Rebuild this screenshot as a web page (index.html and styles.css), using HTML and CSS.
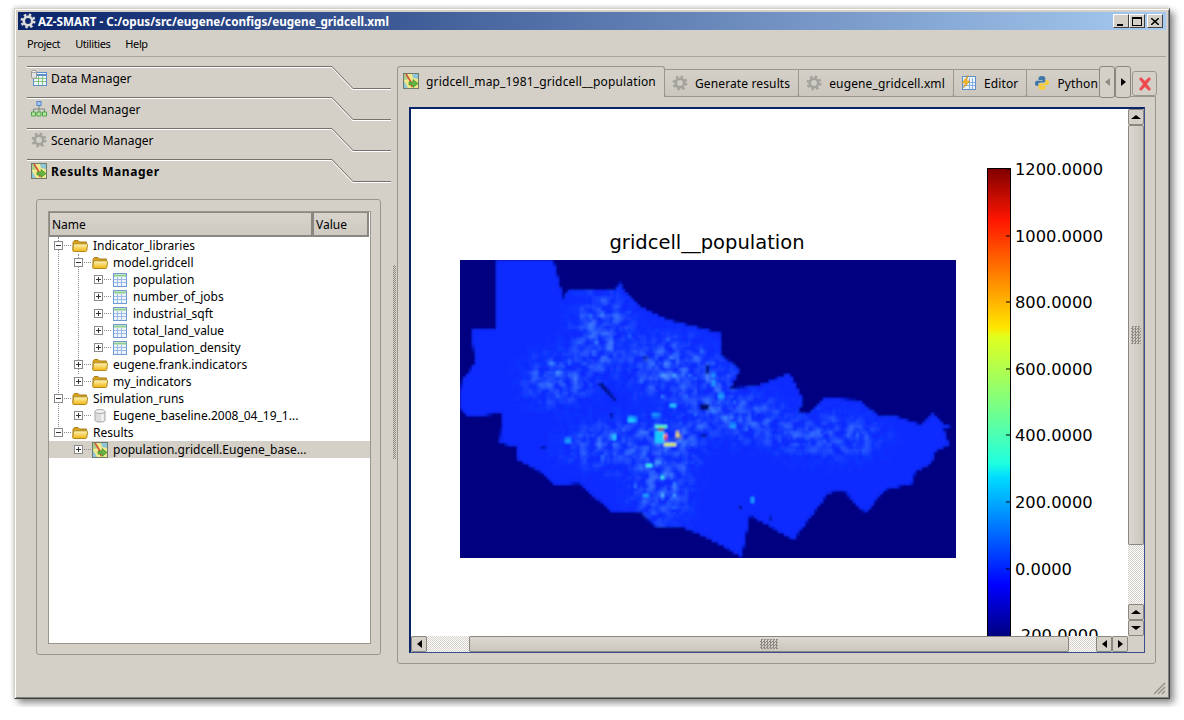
FILE: index.html
```html
<!DOCTYPE html>
<html lang="en">
<head>
    <meta charset="UTF-8">
    <meta name="viewport" content="width=device-width, initial-scale=1.0">
    <title>AZ-SMART</title>
    <link rel="stylesheet" href="styles.css">
</head>
<body>
    <svg class="defs" width="0" height="0">
        <defs>
            <linearGradient id="folder-front" x1="0" y1="0" x2="0" y2="1">
                <stop offset="0" stop-color="#fff6bd"/>
                <stop offset="1" stop-color="#f0b40f"/>
            </linearGradient>
        </defs>
        <symbol id="gear" viewBox="0 0 16 16">
            <circle cx="8" cy="8" r="6.2" fill="none" stroke="currentColor" stroke-width="2.6" stroke-dasharray="2.4 2.47"/>
            <circle cx="8" cy="8" r="4.2" fill="none" stroke="currentColor" stroke-width="2.6"/>
        </symbol>
        <symbol id="folder" viewBox="0 0 16 16">
            <path d="M1 12V4.500L2.500 2.500h3.500L7.500 4H14.500V12z" fill="#d9a21c" stroke="#a87d1a"/>
            <path d="M1.500 13.500C.8 13.500.7 12.800.8 12L1.500 7C1.600 6.200 2 5.800 2.800 5.800H14.500C15.300 5.800 15.600 6.400 15.500 7L14.800 12.300C14.700 13.100 14.200 13.500 13.500 13.500z" fill="url(#folder-front)" stroke="#b08a1f"/>
        </symbol>
        <symbol id="table" viewBox="0 0 16 16">
            <rect x="1.500" y="1.500" width="13" height="13" fill="#eef4fc" stroke="#6f9bd0"/>
            <path d="M2 3.500h12" stroke="#8fcf8a" stroke-width="2"/>
            <path d="M2 7.500h12M2 10.500h12M5.500 5v9M9.500 5v9" stroke="#9dbbe2"/>
        </symbol>
        <symbol id="cylinder" viewBox="0 0 16 16">
            <path d="M3 3.500v9c0 2 10 2 10 0v-9z" fill="#dcdcdc" stroke="#a8a8a8"/>
            <ellipse cx="8" cy="3.500" rx="5" ry="2" fill="#f4f4f4" stroke="#a8a8a8"/>
            <path d="M10.500 6v7" stroke="#f6f6f6" stroke-width="2"/>
        </symbol>
        <symbol id="map" viewBox="0 0 16 16">
            <rect x=".5" y=".5" width="15" height="15" fill="#f0e98a" stroke="#6f7a68"/>
            <path d="M9 1h6v5L10 5zM1 8l4 7H1z" fill="#8cc6d8"/>
            <path d="M1 1h3l2 5-5 1z" fill="#a7cf8a"/>
            <path d="M3 1 8 9l1 5" stroke="#d8503a" stroke-width="1.600" fill="none"/>
            <path d="M6 9h4V6.500l5 4-5 4V12H6z" fill="#63b53f" stroke="#3c7f28" stroke-width=".6"/>
        </symbol>
        <symbol id="datagrid" viewBox="0 0 16 16">
            <rect x="2.500" y="2.500" width="13" height="13" fill="#eef4fc" stroke="#5f8fcb"/>
            <path d="M3 5h12" stroke="#5f8fcb" stroke-width="2"/>
            <path d="M3 8.500h12M3 11.500h12M7.500 6v9M11.500 6v9" stroke="#86c27a"/>
            <path d="M.5 1.500v6c0 1 5 1 5 0v-6z" fill="#e4e4e4" stroke="#9a9a9a"/>
            <ellipse cx="3" cy="1.500" rx="2.500" ry="1" fill="#fff" stroke="#9a9a9a"/>
        </symbol>
        <symbol id="org" viewBox="0 0 16 16">
            <rect x="6" y=".5" width="4" height="4" fill="#a9c6ef" stroke="#4f86d0"/>
            <path d="M8 5v3M2.500 11V8h11v3M8 8v3" stroke="#7a8a7a" fill="none"/>
            <path d="M.5 11h4v4h-4zM6 11h4v4H6zM11.500 11h4v4h-4z" fill="#b7e3a5" stroke="#4ea446"/>
        </symbol>
        <symbol id="editor" viewBox="0 0 16 16">
            <rect x="1.500" y="1.500" width="13" height="13" fill="#eef4fc" stroke="#5f8fcb"/>
            <path d="M2 7.500h12M2 10.500h12M8.500 3v11M11.500 3v11" stroke="#86b0df"/>
            <path d="M7 .5 1 8h3.500L2.500 13 9 6H5.500z" fill="#f3b92f" stroke="#c98a12" stroke-width=".6"/>
        </symbol>
        <symbol id="python" viewBox="0 0 16 16">
            <path d="M8 1C5 1 4.500 2 4.500 3.500V5H8.500v.8H3C1.500 5.800 1 7 1 8.500S1.700 11 3 11h1.300V9.500c0-1.300 1-2 2.200-2h3c1 0 1.800-.8 1.800-1.800V3.500C11.300 2 10.500 1 8 1z" fill="#3f77a8"/>
            <path d="M8 15c3 0 3.500-1 3.500-2.500V11H7.500v-.8H13c1.500 0 2-1.200 2-2.700S14.300 5 13 5h-1.300v1.500c0 1.300-1 2-2.200 2h-3c-1 0-1.800.8-1.800 1.800v2.200C4.700 14 5.500 15 8 15z" fill="#f5cd3c"/>
        </symbol>
        <symbol id="tabline" viewBox="0 0 364 24">
            <path d="M0 .5H305L326 22.500H364" fill="none" stroke="#75726c"/>
            <path d="M0 1.500H304.500L325.500 23.500H364" fill="none" stroke="#fff"/>
        </symbol>
    </svg>

    <div class="window">
        <div class="titlebar">
            <svg class="title-icon"><use href="#gear"/></svg>
            <span class="title-text">AZ-SMART - C:/opus/src/eugene/configs/eugene_gridcell.xml</span>
            <div class="wm-buttons">
                <button class="wm-btn"><span class="wm-min"></span></button>
                <button class="wm-btn wm-gap"><span class="wm-max"></span></button>
                <button class="wm-btn">
                    <svg class="wm-x" viewBox="0 0 8 7"><path d="M0 0 8 7M8 0 0 7" stroke="#000" stroke-width="1.500"/></svg>
                </button>
            </div>
        </div>

        <div class="menubar">
            <span>Project</span>
            <span>Utilities</span>
            <span>Help</span>
        </div>

        <div class="main">
            <div class="left">
                <div class="toolbox-tab">
                    <svg class="tab-line"><use href="#tabline"/></svg>
                    <svg class="icon"><use href="#datagrid"/></svg>Data Manager
                </div>
                <div class="toolbox-tab">
                    <svg class="tab-line"><use href="#tabline"/></svg>
                    <svg class="icon"><use href="#org"/></svg>Model Manager
                </div>
                <div class="toolbox-tab">
                    <svg class="tab-line"><use href="#tabline"/></svg>
                    <svg class="icon gear-grey"><use href="#gear"/></svg>Scenario Manager
                </div>
                <div class="toolbox-tab active">
                    <svg class="tab-line"><use href="#tabline"/></svg>
                    <svg class="icon"><use href="#map"/></svg>Results Manager
                </div>

                <div class="group">
                    <div class="tree">
                        <div class="tree-head">
                            <div class="head-name">Name</div>
                            <div class="head-value">Value</div>
                        </div>
                        <div class="guide guide-a"></div>
                        <div class="guide guide-b"></div>
                        <div class="row"><span class="exp open"></span><svg class="icon"><use href="#folder"/></svg>Indicator_libraries</div>
                        <div class="row l1"><span class="exp open"></span><svg class="icon"><use href="#folder"/></svg>model.gridcell</div>
                        <div class="row l2"><span class="exp"></span><svg class="icon"><use href="#table"/></svg>population</div>
                        <div class="row l2"><span class="exp"></span><svg class="icon"><use href="#table"/></svg>number_of_jobs</div>
                        <div class="row l2"><span class="exp"></span><svg class="icon"><use href="#table"/></svg>industrial_sqft</div>
                        <div class="row l2"><span class="exp"></span><svg class="icon"><use href="#table"/></svg>total_land_value</div>
                        <div class="row l2"><span class="exp"></span><svg class="icon"><use href="#table"/></svg>population_density</div>
                        <div class="row l1"><span class="exp"></span><svg class="icon"><use href="#folder"/></svg>eugene.frank.indicators</div>
                        <div class="row l1"><span class="exp"></span><svg class="icon"><use href="#folder"/></svg>my_indicators</div>
                        <div class="row"><span class="exp open"></span><svg class="icon"><use href="#folder"/></svg>Simulation_runs</div>
                        <div class="row l1"><span class="exp"></span><svg class="icon"><use href="#cylinder"/></svg>Eugene_baseline.2008_04_19_1...</div>
                        <div class="row"><span class="exp open"></span><svg class="icon"><use href="#folder"/></svg>Results</div>
                        <div class="row l1 selected"><span class="exp"></span><svg class="icon"><use href="#map"/></svg>population.gridcell.Eugene_base...</div>
                    </div>
                </div>
            </div>

            <div class="splitter"></div>

            <div class="right">
                <div class="tabrow">
                    <div class="tabs">
                        <div class="tab active"><svg class="icon"><use href="#map"/></svg>gridcell_map_1981_gridcell__population</div>
                        <div class="tab"><svg class="icon gear-grey"><use href="#gear"/></svg>Generate results</div>
                        <div class="tab"><svg class="icon gear-grey"><use href="#gear"/></svg>eugene_gridcell.xml</div>
                        <div class="tab"><svg class="icon"><use href="#editor"/></svg>Editor</div>
                        <div class="tab"><svg class="icon"><use href="#python"/></svg>Python</div>
                    </div>
                    <button class="tab-scroll"><span class="arrow left-arrow disabled"></span></button>
                    <button class="tab-scroll"><span class="arrow right-arrow"></span></button>
                    <button class="tab-close">
                        <svg viewBox="0 0 16 16"><path d="M2 3 4 1l4 4 4-4 2 2-4 5 4 5-2 2-4-4-4 4-2-2 4-5z" fill="#f0474a" stroke="#d99a9a" stroke-width=".7"/></svg>
                    </button>
                </div>
                <div class="pane">
                    <div class="view">
                        <div class="canvas">
                            <svg class="plot" viewBox="411 109 717 527" width="717" height="527">
                                <defs>
                                    <linearGradient id="jet" x1="0" y1="1" x2="0" y2="0">
                                        <stop offset="0" stop-color="#00007f"/>
                                        <stop offset=".11" stop-color="#0000ff"/>
                                        <stop offset=".34" stop-color="#00dcff"/>
                                        <stop offset=".37" stop-color="#1fffe0"/>
                                        <stop offset=".5" stop-color="#7fff7f"/>
                                        <stop offset=".64" stop-color="#e0ff1f"/>
                                        <stop offset=".66" stop-color="#ffe600"/>
                                        <stop offset=".89" stop-color="#ff1500"/>
                                        <stop offset="1" stop-color="#7f0000"/>
                                    </linearGradient>
                                    <clipPath id="outline">
                                        <path d="M125 15H295L325 130 340 105H480L495 80 510 110 555 155 640 195 795 235 800 300 855 345 825 400 900 395 1005 355 1045 435 1030 475H1060L1110 430 1210 435 1255 470 1275 485 1310 480 1400 510 1435 475 1465 510H1500L1465 520 1482 570 1440 590 1430 625 1380 650 1375 685 1290 705 1235 770 1220 765 1165 705 1120 715 1015 855 885 780 860 905 760 850 680 815H600L555 770H470L370 685 300 690 255 650 190 615 185 575 135 565 140 475 35 485 15 455 20 380 60 325 50 225H125L120 195z"/>
                                    </clipPath>
                                    <filter id="speckle" x="0" y="0" width="100%" height="100%">
                                        <feTurbulence type="fractalNoise" baseFrequency=".04" numOctaves="2" seed="4"/>
                                        <feColorMatrix values="0 0 0 0 .08  0 0 0 0 .3  0 0 0 0 1  2.200 0 0 0 -.85"/>
                                    </filter>
                                    <filter id="sparks" x="0" y="0" width="100%" height="100%">
                                        <feTurbulence type="fractalNoise" baseFrequency=".06" numOctaves="1" seed="11"/>
                                        <feColorMatrix values="0 0 0 0 .1  0 0 0 0 .62  0 0 0 0 1  9 0 0 0 -6.300"/>
                                    </filter>
                                    <filter id="soft"><feGaussianBlur stdDeviation="32"/></filter>
                                    <!-- samples every third pixel so the map looks like an upscaled raster -->
                                    <filter id="raster" filterUnits="userSpaceOnUse" primitiveUnits="userSpaceOnUse" x="460" y="260" width="496" height="298">
                                        <feFlood x="461" y="261" width="1" height="1" flood-color="#000"/>
                                        <feComposite x="460" y="260" width="3" height="3" result="dot"/>
                                        <feTile x="460" y="260" width="496" height="298" result="grid"/>
                                        <feComposite in="SourceGraphic" in2="grid" operator="in" x="460" y="260" width="496" height="298"/>
                                        <feMorphology operator="dilate" radius="1" x="460" y="260" width="496" height="298"/>
                                        <feGaussianBlur stdDeviation=".8" x="460" y="260" width="496" height="298"/>
                                    </filter>
                                    <mask id="zones">
                                        <g fill="#fff" filter="url(#soft)">
                                            <ellipse cx="440" cy="230" rx="80" ry="120"/>
                                            <ellipse cx="310" cy="370" rx="100" ry="70"/>
                                            <ellipse cx="640" cy="340" rx="120" ry="90"/>
                                            <ellipse cx="780" cy="400" rx="70" ry="70"/>
                                            <ellipse cx="880" cy="490" rx="100" ry="60"/>
                                            <ellipse cx="530" cy="570" rx="210" ry="60"/>
                                            <ellipse cx="620" cy="690" rx="80" ry="120"/>
                                            <ellipse cx="1120" cy="545" rx="170" ry="50"/>
                                            <ellipse cx="720" cy="500" rx="50" ry="40"/>
                                        </g>
                                    </mask>
                                </defs>

                                <text class="plot-title" x="707" y="249">gridcell__population</text>

                                <rect x="460" y="260" width="496" height="298" fill="#000080"/>
                                <g filter="url(#raster)">
                                    <rect x="460" y="260" width="496" height="298" fill="#000080"/>
                                    <g transform="translate(455 255) scale(.33333)">
                                        <g clip-path="url(#outline)">
                                            <rect x="15" y="15" width="1488" height="894" fill="#0a2cff"/>
                                            <g mask="url(#zones)">
                                                <rect x="15" y="15" width="1488" height="894" filter="url(#speckle)"/>
                                                <rect x="15" y="15" width="1488" height="894" filter="url(#sparks)"/>
                                            </g>
                                            <g fill="#1f9dff">
                                                <rect x="522" y="487" width="20" height="16" fill="#1fd4ff"/>
                                                <rect x="590" y="478" width="24" height="9" fill="#22c8ff"/>
                                                <rect x="645" y="444" width="18" height="9" fill="#22c8ff"/>
                                                <rect x="333" y="550" width="12" height="12"/>
                                                <rect x="470" y="540" width="15" height="15" fill="#22c8ff"/>
                                                <rect x="575" y="627" width="18" height="10" fill="#3cf0e0"/>
                                                <rect x="615" y="659" width="14" height="10" fill="#3cf0e0"/>
                                                <rect x="565" y="717" width="18" height="9"/>
                                                <rect x="790" y="415" width="20" height="18"/>
                                                <rect x="768" y="353" width="10" height="12"/>
                                                <rect x="770" y="372" width="12" height="24"/>
                                                <rect x="825" y="505" width="18" height="12"/>
                                                <rect x="885" y="726" width="15" height="15"/>
                                                <rect x="600" y="525" width="28" height="42" fill="#18c8ff"/>
                                                <rect x="598" y="510" width="40" height="9" fill="#5cf0c0"/>
                                                <rect x="628" y="561" width="38" height="10" fill="#d8f040"/>
                                                <rect x="624" y="536" width="12" height="21" fill="#ff8a00"/>
                                                <rect x="613" y="516" width="10" height="9" fill="#d01010"/>
                                                <rect x="627" y="545" width="9" height="9" fill="#e01010"/>
                                                <path d="M664 527 683 550H658z" fill="#f2e020"/>
                                            </g>
                                            <g fill="#000a70">
                                                <path d="M432 388 440 384 486 434 478 440z"/>
                                                <rect x="750" y="330" width="10" height="24"/>
                                                <rect x="735" y="450" width="24" height="12"/>
                                                <rect x="740" y="535" width="12" height="9"/>
                                                <rect x="568" y="302" width="9" height="14"/>
                                                <rect x="262" y="575" width="9" height="9"/>
                                                <rect x="852" y="752" width="10" height="12"/>
                                                <rect x="942" y="785" width="9" height="9"/>
                                                <rect x="464" y="478" width="9" height="9"/>
                                            </g>
                                        </g>
                                    </g>
                                </g>

                                <rect x="987.500" y="168.500" width="23" height="468" fill="url(#jet)" stroke="#000"/>
                                <path class="ticks" d="M1006 169h5M1006 236h5M1006 302h5M1006 369h5M1006 435h5M1006 502h5M1006 569h5"/>
                                <g class="plot-labels">
                                    <text x="1015" y="175">1200.0000</text>
                                    <text x="1015" y="242">1000.0000</text>
                                    <text x="1015" y="308">800.0000</text>
                                    <text x="1015" y="375">600.0000</text>
                                    <text x="1015" y="441">400.0000</text>
                                    <text x="1015" y="508">200.0000</text>
                                    <text x="1015" y="575">0.0000</text>
                                    <text x="1015" y="641">-200.0000</text>
                                </g>
                            </svg>
                        </div>

                        <div class="vbar">
                            <button class="sb-btn"><span class="arrow up-arrow"></span></button>
                            <div class="sb-thumb v-thumb"><span class="grip"></span></div>
                            <div class="sb-track"></div>
                            <button class="sb-btn"><span class="arrow up-arrow"></span></button>
                            <button class="sb-btn"><span class="arrow down-arrow"></span></button>
                        </div>
                        <div class="hbar">
                            <button class="sb-btn"><span class="arrow left-arrow"></span></button>
                            <div class="sb-track h-track-a"></div>
                            <div class="sb-thumb h-thumb"><span class="grip"></span></div>
                            <div class="sb-track"></div>
                            <button class="sb-btn"><span class="arrow left-arrow"></span></button>
                            <button class="sb-btn"><span class="arrow right-arrow"></span></button>
                        </div>
                        <div class="corner"></div>
                    </div>
                </div>
            </div>
        </div>

        <svg class="sizegrip" viewBox="0 0 14 14"><path d="M13 2 2 13M13 6 6 13M13 10 10 13" stroke="#8f8b84" stroke-width="1.200"/></svg>
    </div>
</body>
</html>
```

FILE: styles.css
```css
* {
    box-sizing: border-box;
}
body {
    margin: 0;
    padding: 8px 14px;
    background: #fff;
    font-family: "Noto Sans", sans-serif;
    font-size: 12px;
    color: #000;
}
button {
    padding: 0;
    font: inherit;
}
.defs {
    position: absolute;
}
.icon {
    width: 16px;
    height: 16px;
    flex: none;
}
.gear-grey {
    color: #a3a29d;
}

/* window frame */
.window {
    position: relative;
    display: flex;
    flex-direction: column;
    width: 1156px;
    height: 691px;
    padding: 3px;
    background: #d4d0c8;
    border: 1px solid;
    border-color: #d4d0c8 #404040 #404040 #d4d0c8;
    box-shadow: inset 1px 1px 0 #fff, inset -1px -1px 0 #808080, 4px 4px 7px rgba(0, 0, 0, 0.45), -1px -1px 4px rgba(0, 0, 0, 0.15);
}
.titlebar {
    display: flex;
    align-items: center;
    flex: none;
    height: 18px;
    padding: 0 3px 0 2px;
    background: linear-gradient(90deg, #0a246a, #a6caf0);
    color: #fff;
    font-size: 11.700px;
    font-weight: bold;
}
.title-icon {
    width: 16px;
    height: 16px;
    color: #dcdcdc;
    margin-right: 2px;
}
.wm-buttons {
    display: flex;
    margin-left: auto;
}
.wm-btn {
    display: flex;
    align-items: center;
    justify-content: center;
    width: 16px;
    height: 14px;
    background: #d4d0c8;
    border: 1px solid;
    border-color: #fff #404040 #404040 #fff;
}
.wm-gap {
    margin-right: 2px;
}
.wm-min {
    width: 6px;
    height: 2px;
    margin-top: 7px;
    margin-right: 2px;
    background: #000;
}
.wm-max {
    width: 10px;
    height: 9px;
    border: 1px solid #000;
    border-top-width: 2px;
}
.wm-x {
    width: 8px;
    height: 7px;
}
.menubar {
    display: flex;
    align-items: center;
    flex: none;
    gap: 15px;
    height: 27px;
    padding: 0 9px 0;
    border-bottom: 1px solid #a8a49c;
    font-size: 11px;
    letter-spacing: -0.4px;
}

/* main area */
.main {
    display: flex;
    flex: 1;
    min-height: 0;
    padding: 9px 10px 31px 9px;
}
.left {
    display: flex;
    flex-direction: column;
    flex: none;
    width: 364px;
}
.toolbox-tab {
    position: relative;
    display: flex;
    align-items: center;
    gap: 4px;
    flex: none;
    height: 31px;
    padding: 0 0 7px 4px;
}
.toolbox-tab.active {
    font-weight: bold;
    letter-spacing: 0.55px;
}
.tab-line {
    position: absolute;
    top: 0;
    left: 0;
    width: 364px;
    height: 24px;
}
.group {
    flex: 1;
    margin: 9px 10px 9px 9px;
    padding: 11px 9px 10px 11px;
    border: 1px solid #9a968e;
    border-radius: 3px;
}

/* tree */
.tree {
    position: relative;
    height: 100%;
    background: #fff;
    border: 1px solid #9a968e;
}
.tree-head {
    display: flex;
    height: 25px;
}
.head-name,
.head-value {
    display: flex;
    align-items: center;
    padding-left: 2px;
    background: linear-gradient(#d8d4cc, #cdc9c1);
    border: 1px solid #8a8780;
    border-width: 1px 2px 2px 1px;
}
.head-name {
    width: 264px;
}
.head-value {
    width: 56px;
}
.guide {
    position: absolute;
    width: 1px;
    border-left: 1px dotted #8a8a8a;
}
.guide-a {
    left: 9px;
    top: 25px;
    height: 196px;
}
.guide-b {
    left: 29px;
    top: 42px;
    height: 120px;
}
.row {
    position: relative;
    display: flex;
    align-items: center;
    height: 17px;
    padding-left: 5px;
    white-space: nowrap;
}
.row .icon {
    margin-right: 5px;
}
.l1 {
    padding-left: 25px;
}
.l2 {
    padding-left: 45px;
}
.selected {
    background: #d4d0c8;
}
.exp {
    position: relative;
    flex: none;
    width: 9px;
    height: 9px;
    margin-right: 9px;
    background: #fff;
    border: 1px solid #8a8a8a;
}
.exp::before {
    content: "";
    position: absolute;
    left: 1px;
    top: 3px;
    width: 5px;
    height: 1px;
    background: #333;
}
.exp::after {
    content: "";
    position: absolute;
    left: 3px;
    top: 1px;
    width: 1px;
    height: 5px;
    background: #333;
}
.exp.open::after {
    display: none;
}

/* dotted stub from the expander to the icon */
.row::before {
    content: "";
    position: absolute;
    width: 7px;
    margin-left: 10px;
    border-top: 1px dotted #8a8a8a;
}
.splitter {
    flex: none;
    align-self: flex-start;
    width: 3px;
    height: 194px;
    margin: 199px 1px 0 2px;
    background: repeating-conic-gradient(#8f8b84 0 25%, #d4d0c8 0 50%) 0 0 / 2px 2px;
}
.right {
    display: flex;
    flex-direction: column;
    flex: 1;
    min-width: 0;
}

/* tabs */
.tabrow {
    position: relative;
    z-index: 1;
    display: flex;
    flex: none;
    height: 31px;
}
.tabs {
    display: flex;
    align-items: flex-end;
    flex: none;
    width: 702px;
    overflow: hidden;
}
.tab {
    display: flex;
    align-items: center;
    gap: 7px;
    flex: none;
    height: 28px;
    padding: 0 8px 0 7px;
    background: linear-gradient(#d4d0c8, #cbc7bf);
    border: 1px solid #9a968e;
    border-left-width: 0;
    border-radius: 0 0 3px 3px;
    letter-spacing: 0.13px;
    white-space: nowrap;
}
.tab.active {
    height: 31px;
    padding: 0 8px 2px 5px;
    background: #d4d0c8;
    border-left-width: 1px;
    border-bottom: none;
    border-radius: 3px 3px 0 0;
    letter-spacing: 0.16px;
}
.tab-scroll {
    display: flex;
    align-items: center;
    justify-content: center;
    flex: none;
    width: 16px;
    height: 32px;
    background: #d4d0c8;
    border: 1px solid #8a8780;
    border-radius: 3px;
}
.tab-close {
    display: flex;
    align-items: center;
    justify-content: center;
    flex: none;
    width: 25px;
    height: 25px;
    margin: 5px -1px 0 1px;
    background: #d4d0c8;
    border: 1px solid #9a968e;
    border-radius: 3px;
}
.tab-close svg {
    width: 16px;
    height: 16px;
}
.arrow {
    width: 0;
    height: 0;
    border-style: solid;
    border-color: transparent;
}
.left-arrow {
    border-width: 4px 5px 4px 0;
    border-right-color: #000;
}
.right-arrow {
    border-width: 4px 0 4px 5px;
    border-left-color: #000;
}
.up-arrow {
    border-width: 0 5px 4px;
    border-bottom-color: #000;
}
.down-arrow {
    border-width: 4px 5px 0;
    border-top-color: #000;
}
.left-arrow.disabled {
    border-right-color: #8f8b84;
}
.pane {
    flex: 1;
    min-height: 0;
    margin-top: -1px;
    padding: 10px 10px 10px 11px;
    border: 1px solid #9a968e;
    border-radius: 0 0 3px 3px;
}

/* plot view with its scrollbars */
.view {
    display: grid;
    grid-template-columns: 717px 16px;
    grid-template-rows: 527px 16px;
    height: 100%;
    background: #d4d0c8;
    border: solid #0a246a;
    border-width: 2px 1px 1px 2px;
    border-right-color: #3b4f8c;
    border-bottom-color: #3b4f8c;
}
.canvas {
    background: #fff;
    overflow: hidden;
}
.plot {
    display: block;
}
.plot-title {
    font: 19.500px "DejaVu Sans", sans-serif;
    text-anchor: middle;
}
.plot-labels {
    font: 16.300px "DejaVu Sans", sans-serif;
}
.ticks {
    stroke: #000;
}
.vbar,
.hbar {
    display: flex;
}
.vbar {
    flex-direction: column;
}
.sb-btn {
    display: flex;
    align-items: center;
    justify-content: center;
    flex: none;
    width: 16px;
    height: 16px;
    background: #d4d0c8;
    border: 1px solid #8a8780;
    border-radius: 2px;
}
.sb-track {
    flex: 1;
    background: repeating-conic-gradient(#d4d0c8 0 25%, #fff 0 50%) 0 0 / 2px 2px;
}
.h-track-a {
    flex: none;
    width: 42px;
}
.sb-thumb {
    display: flex;
    align-items: center;
    justify-content: center;
    flex: none;
    background: linear-gradient(#dcd8d1, #cbc7bf);
    border: 1px solid #8a8780;
    border-radius: 2px;
}
.v-thumb {
    height: 420px;
    background: linear-gradient(90deg, #dcd8d1, #cbc7bf);
}
.h-thumb {
    width: 600px;
}
.grip {
    background: repeating-conic-gradient(#8f8b84 0 25%, transparent 0 50%) 0 0 / 3px 3px;
}
.v-thumb .grip {
    width: 10px;
    height: 18px;
}
.h-thumb .grip {
    width: 18px;
    height: 10px;
}
.sizegrip {
    position: absolute;
    right: 3px;
    bottom: 3px;
    width: 14px;
    height: 14px;
}
```
